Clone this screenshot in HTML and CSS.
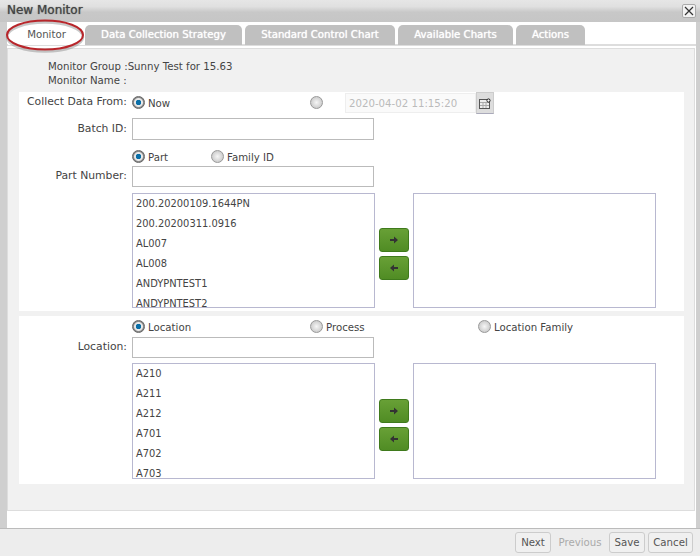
FILE: index.html
```html
<!DOCTYPE html>
<html lang="en">
<head>
  <meta charset="UTF-8">
  <title>New Monitor</title>
  <link rel="stylesheet" href="styles.css">
</head>
<body>
  <div class="dialog">
    <div class="titlebar">
      <span class="title">New Monitor</span>
      <button class="close" type="button">
        <svg width="10" height="10" viewBox="0 0 10 10"><path d="M1 1L9 9M9 1L1 9" stroke="#333" stroke-width="1.2" fill="none"/></svg>
      </button>
    </div>
    <div class="content">
      <div class="tabs">
        <div class="tab tab-active tab-monitor">Monitor</div>
        <div class="tab tab-strategy">Data Collection Strategy</div>
        <div class="tab tab-chart">Standard Control Chart</div>
        <div class="tab tab-avail">Available Charts</div>
        <div class="tab tab-actions">Actions</div>
      </div>
      <div class="panel">
        <div class="info">
          <div>Monitor Group :Sunny Test for 15.63</div>
          <div>Monitor Name :</div>
        </div>

        <div class="section section-part">
          <div class="row row-collect">
            <label class="lbl">Collect Data From:</label>
            <div class="radios">
              <span class="radio-item item-now"><span class="radio on"></span>Now</span>
              <span class="radio-item item-date"><span class="radio"></span></span>
              <input class="date" type="text" value="2020-04-02 11:15:20" disabled>
              <span class="cal">
                <svg width="12" height="11" viewBox="0 0 12 11"><rect x="0.5" y="1.5" width="10" height="9" fill="#eee" stroke="#555"/><path d="M1 4.5H10M4 5V10M7 5V10M1 7.5H10" stroke="#aaa" fill="none"/><circle cx="9.5" cy="2.5" r="1.6" fill="#fff" stroke="#222"/></svg>
              </span>
            </div>
          </div>
          <div class="row row-batch">
            <label class="lbl">Batch ID:</label>
            <input class="txt" type="text">
          </div>
          <div class="row row-kind">
            <span></span>
            <div class="radios">
              <span class="radio-item item-part"><span class="radio on"></span>Part</span>
              <span class="radio-item"><span class="radio"></span>Family ID</span>
            </div>
          </div>
          <div class="row row-field">
            <label class="lbl">Part Number:</label>
            <input class="txt" type="text">
          </div>
          <div class="picker">
            <div class="list">
              <div>200.20200109.1644PN</div>
              <div>200.20200311.0916</div>
              <div>AL007</div>
              <div>AL008</div>
              <div>ANDYPNTEST1</div>
              <div>ANDYPNTEST2</div>
            </div>
            <div class="moves">
              <button class="move" type="button"><svg width="10" height="10" viewBox="0 0 10 10"><path d="M1 4H5V1.5L9 5L5 8.5V6H1Z" fill="#333"/></svg></button>
              <button class="move" type="button"><svg width="10" height="10" viewBox="0 0 10 10"><path d="M9 4H5V1.5L1 5L5 8.5V6H9Z" fill="#333"/></svg></button>
            </div>
            <div class="list"></div>
          </div>
        </div>

        <div class="section section-loc">
          <div class="row row-kind-loc">
            <span></span>
            <div class="radios">
              <span class="radio-item item-loc"><span class="radio on"></span>Location</span>
              <span class="radio-item item-proc"><span class="radio"></span>Process</span>
              <span class="radio-item item-fam"><span class="radio"></span>Location Family</span>
            </div>
          </div>
          <div class="row row-field">
            <label class="lbl">Location:</label>
            <input class="txt" type="text">
          </div>
          <div class="picker">
            <div class="list">
              <div>A210</div>
              <div>A211</div>
              <div>A212</div>
              <div>A701</div>
              <div>A702</div>
              <div>A703</div>
            </div>
            <div class="moves">
              <button class="move" type="button"><svg width="10" height="10" viewBox="0 0 10 10"><path d="M1 4H5V1.5L9 5L5 8.5V6H1Z" fill="#333"/></svg></button>
              <button class="move" type="button"><svg width="10" height="10" viewBox="0 0 10 10"><path d="M9 4H5V1.5L1 5L5 8.5V6H9Z" fill="#333"/></svg></button>
            </div>
            <div class="list"></div>
          </div>
        </div>
      </div>
    </div>
    <div class="footer">
      <button class="btn btn-next" type="button">Next</button>
      <span class="btn-off">Previous</span>
      <button class="btn btn-save" type="button">Save</button>
      <button class="btn btn-cancel" type="button">Cancel</button>
    </div>
  </div>

  <svg class="ring" width="90" height="38" viewBox="0 0 90 38">
    <ellipse cx="45" cy="20" rx="38" ry="14.5" fill="none" stroke="#888" stroke-width="2.5" opacity="0.45"/>
    <ellipse cx="45" cy="18" rx="38" ry="14.5" fill="none" stroke="#b8262b" stroke-width="2"/>
  </svg>
</body>
</html>
```

FILE: styles.css
```css
* {
  box-sizing: border-box;
}
html, body {
  margin: 0;
  height: 100%;
}
body {
  font-family: "DejaVu Sans", sans-serif;
  font-size: 10.2px;
  color: #444;
  background: #cfcfcf;
  overflow: hidden;
  position: relative;
}
.dialog {
  width: 700px;
  height: 556px;
  display: flex;
  flex-direction: column;
}
.titlebar {
  height: 22px;
  flex: none;
  padding: 3px 4px 0 7px;
  display: flex;
  justify-content: space-between;
  background: linear-gradient(#e6e6e6, #e0e0e0 30%, #c8c8c8 55%, #c6c6c6);
}
.title {
  font-size: 12px;
  color: #444;
  text-shadow: 0 0 1px #555;
}
.close {
  width: 14px;
  height: 14px;
  padding: 1px;
  margin-top: 1px;
  display: flex;
  align-items: center;
  justify-content: center;
  background: #f2f2f2;
  border: 1px solid #aaa;
  border-radius: 2px;
}
.content {
  flex: 1;
  margin: 0 4px 0 7px;
  background: #fff;
  padding-bottom: 17px;
  display: flex;
  flex-direction: column;
}
.tabs {
  height: 21px;
  flex: none;
  margin-top: 3px;
  padding-left: 1px;
  display: flex;
  border-bottom: 2px solid #ddd;
}
.tab {
  height: 20px;
  padding-top: 4px;
  text-align: center;
  color: #fff;
  background: #c0c0c0;
  border-radius: 5px 5px 0 0;
  text-shadow: 0 0 1px #fff;
  margin-right: 3px;
}
.tab-active {
  background: #fff;
  color: #555;
  text-shadow: none;
  margin-right: 0;
}
.tab-monitor { width: 77px; }
.tab-strategy { width: 157px; }
.tab-chart { width: 150px; }
.tab-avail { width: 115px; }
.tab-actions { width: 69px; }
.panel {
  flex: 1;
  margin-top: 2px;
  margin-right: 1px;
  background: #f1f1f1;
  border: 1px solid #ddd;
  padding: 10px 7px 0 11px;
}
.info {
  padding: 1px 0 0 29px;
  line-height: 14px;
  height: 33px;
}
.section {
  background: #fff;
  width: 665px;
}
.section-part {
  height: 219px;
}
.section-loc {
  height: 168px;
  margin-top: 5px;
}
.row {
  display: grid;
  grid-template-columns: 108px 1fr;
  column-gap: 5px;
  align-items: center;
}
.row-collect { height: 21px; }
.row-batch { height: 22px; margin-top: 5px; }
.row-kind { height: 19px; margin-top: 7px; }
.row-kind-loc { height: 21px; }
.row-field { height: 21px; }
.lbl {
  text-align: right;
  font-size: 10.8px;
  margin-bottom: 2px;
}
.row-collect .lbl {
  margin-bottom: 4px;
}
.radios {
  display: flex;
  align-items: center;
}
.row-kind .radios, .row-kind-loc .radios {
  margin-top: 2px;
}
.radio-item {
  display: flex;
  align-items: center;
  gap: 3px;
  width: 79px;
  white-space: nowrap;
}
.item-now { width: 178px; }
.item-loc { width: 178px; }
.item-proc { width: 168px; }
.item-fam { width: 100px; }
.item-date { width: 35px; }
.radio {
  width: 13px;
  height: 13px;
  margin-bottom: 2px;
  border-radius: 50%;
  flex: none;
  border: 1px solid #999;
  background: radial-gradient(#f6f6f6, #bdbdbd);
}
.radio.on {
  border: 1px solid #666;
  background: radial-gradient(#0a6fa8 0 2.5px, #e8e8e8 3px 4px, #8a8a8a 5px);
}
.date {
  width: 131px;
  height: 20px;
  padding: 0 3px;
  border: 1px solid #eee;
  background: #fafafa;
  color: #bbb;
  font: inherit;
}
.cal {
  width: 18px;
  height: 22px;
  display: flex;
  align-items: center;
  justify-content: center;
  background: #ddd;
  border: 1px solid #ccc;
  border-bottom: 1px solid #aab;
}
.txt {
  width: 242px;
  height: 100%;
  border: 1px solid #bbb;
  background: #fff;
}
.picker {
  display: flex;
  margin-top: 5px;
  margin-left: 113px;
}
.section-part .picker {
  margin-top: 6px;
}
.list {
  width: 243px;
  height: 115px;
  overflow: hidden;
  padding: 0 3px;
  background: #fff;
  border: 1px solid #b8b8d0;
  font-size: 9.9px;
  line-height: 20px;
  color: #444;
}
.section-loc .list {
  height: 116px;
}
.moves {
  width: 38px;
  padding: 35px 0 0 4px;
  display: flex;
  flex-direction: column;
  gap: 4px;
}
.section-loc .moves {
  padding-top: 36px;
}
.move {
  width: 30px;
  height: 24px;
  padding: 0;
  display: flex;
  align-items: center;
  justify-content: center;
  background: linear-gradient(#68a036, #508c24);
  border: 1px solid #3f7a1c;
  border-radius: 3px;
}
.footer {
  height: 28px;
  flex: none;
  display: flex;
  justify-content: flex-end;
  align-items: center;
  padding-right: 7px;
  background: #ededed;
  border-top: 1px solid #bbb;
}
.btn {
  height: 21px;
  padding: 0;
  font: inherit;
  color: #555;
  background: #f0f0f0;
  border: 1px solid #ccc;
  border-radius: 3px;
}
.btn-next { width: 36px; }
.btn-save { width: 36px; }
.btn-cancel { width: 45px; margin-left: 3px; }
.btn-off {
  width: 58px;
  text-align: center;
  color: #aaa;
}
.ring {
  position: absolute;
  left: 0;
  top: 17px;
}
```
